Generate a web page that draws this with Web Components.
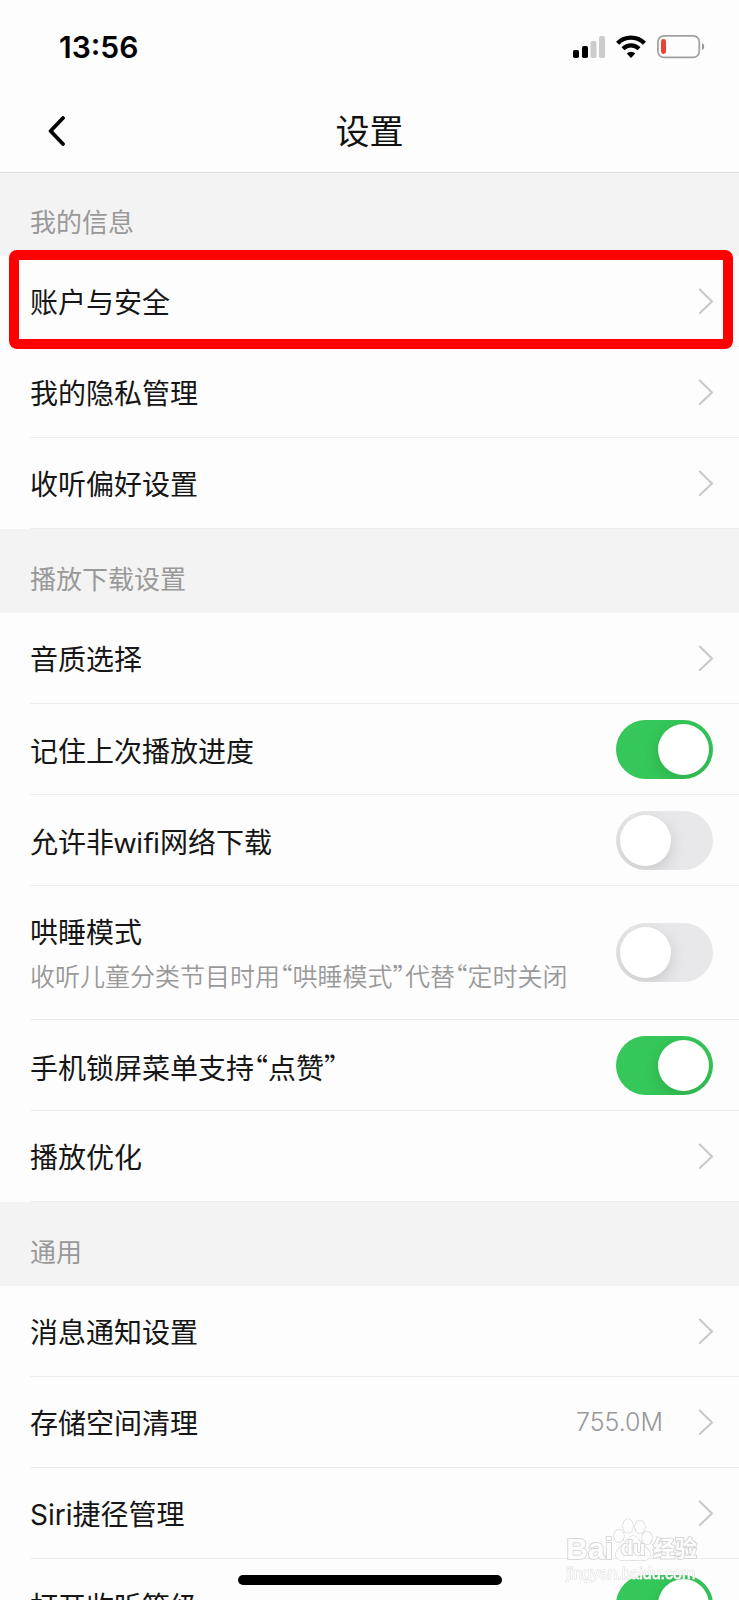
<!DOCTYPE html>
<html lang="zh-CN">
<head>
<meta charset="UTF-8">
<meta name="viewport" content="width=device-width, initial-scale=1">
<title>设置</title>
<style>
  html, body {
    height: 100%;
    margin: 0;
  }

  body {
    background: #fdfdfd;
    color: #161616;
    font-family: Inter, "Noto Sans CJK SC", sans-serif;
    font-size: 28px;
  }

  switch-row {
    font-family: "Noto Sans", "Noto Sans CJK SC", sans-serif;
  }

  /* half-width curly quotes */
  .quoted {
    font-family: "Noto Sans CJK SC", sans-serif;
    font-feature-settings: "halt";
  }
</style>
</head>
<body>

<settings-app>
  <status-bar slot="top" time="13:56"></status-bar>
  <nav-bar slot="top">设置</nav-bar>

  <settings-group label="我的信息">
    <link-row marked>账户与安全</link-row>
    <link-row>我的隐私管理</link-row>
    <link-row>收听偏好设置</link-row>
  </settings-group>

  <settings-group label="播放下载设置">
    <link-row>音质选择</link-row>
    <switch-row on>记住上次播放进度</switch-row>
    <switch-row>允许非wifi网络下载</switch-row>
    <switch-row class="quoted" note="收听儿童分类节目时用“哄睡模式”代替“定时关闭">哄睡模式</switch-row>
    <switch-row class="quoted" on>手机锁屏菜单支持“点赞”</switch-row>
    <link-row>播放优化</link-row>
  </settings-group>

  <settings-group label="通用">
    <link-row>消息通知设置</link-row>
    <link-row value="755.0M">存储空间清理</link-row>
    <link-row>Siri捷径管理</link-row>
    <switch-row on>打开收听等级</switch-row>
  </settings-group>

  <water-mark slot="over"></water-mark>
  <home-indicator slot="over"></home-indicator>
</settings-app>

<script>
  class SettingsApp extends HTMLElement {
    constructor() {
      super();
      this.attachShadow({ mode: "open" });
      this.shadowRoot.innerHTML = `
        <style>
          :host {
            display: flex;
            flex-direction: column;
            height: 100vh;
            overflow: hidden;
          }

          header {
            flex: none;
            position: relative;
            z-index: 1;
            box-shadow: 0 1px 0 #dcdcdc;
          }

          main {
            flex: 1;
            min-height: 0;
            overflow-y: auto;
            scrollbar-width: none;
          }
        </style>
        <header><slot name="top"></slot></header>
        <main><slot></slot></main>
        <slot name="over"></slot>
      `;
    }
  }

  class StatusBar extends HTMLElement {
    connectedCallback() {
      this.attachShadow({ mode: "open" });
      this.shadowRoot.innerHTML = `
        <style>
          :host {
            display: flex;
            align-items: center;
            justify-content: space-between;
            height: 94px;
            padding: 0 34px 0 59px;
            color: #000;
          }

          time {
            font-size: 30px;
            font-weight: 600;
            line-height: 36px;
          }

          .icons {
            display: flex;
            align-items: center;
            gap: 11px;
          }

          svg {
            display: block;
          }
        </style>
        <time>${this.getAttribute("time")}</time>
        <div class="icons">
          <svg width="32" height="24" viewBox="0 0 32 24" aria-label="信号">
            <rect x="0" y="15" width="6" height="8" rx="1.8"/>
            <rect x="9" y="11" width="6" height="12" rx="1.8"/>
            <rect x="17.5" y="6" width="6" height="17" rx="1.8" fill="#ccc"/>
            <rect x="26" y="1" width="6" height="22" rx="1.8" fill="#ccc"/>
          </svg>
          <svg width="30" height="24" viewBox="0 0 30 24" aria-label="无线网络">
            <path d="M1.6 8.2a19 19 0 0 1 26.8 0" fill="none" stroke="#000" stroke-width="4.4"/>
            <path d="M7 13.7a11.4 11.4 0 0 1 16 0" fill="none" stroke="#000" stroke-width="4.2"/>
            <path d="M15 23l-4.3-4.4a6.2 6.2 0 0 1 8.6 0z"/>
          </svg>
          <svg width="48" height="24" viewBox="0 0 48 24" aria-label="电池">
            <rect x=".9" y=".9" width="41.4" height="21.4" rx="6" fill="none" stroke="#a0a0a0" stroke-width="1.7"/>
            <rect x="4" y="4" width="5" height="15" rx="2.4" fill="#ea4335"/>
            <path d="M45 8.2c2.9 1 2.9 5.8 0 6.8z" fill="#969696"/>
          </svg>
        </div>
      `;
    }
  }

  class NavBar extends HTMLElement {
    constructor() {
      super();
      this.attachShadow({ mode: "open" });
      this.shadowRoot.innerHTML = `
        <style>
          :host {
            display: grid;
            grid-template-columns: 80px 1fr 80px;
            align-items: center;
            height: 78px;
          }

          button {
            display: flex;
            justify-content: flex-end;
            border: 0;
            padding: 0 14px 4px 0;
            background: none;
            cursor: pointer;
          }

          h1 {
            margin: 0;
            padding-bottom: 2px;
            text-align: center;
            font-size: 34px;
            font-weight: 400;
            line-height: 48px;
            color: #111;
          }
        </style>
        <button aria-label="返回">
          <svg width="18" height="30" viewBox="0 0 18 30">
            <path d="M15 2L2.6 15l12.4 13" fill="none" stroke="#000" stroke-width="3.8" stroke-linecap="round" stroke-linejoin="round"/>
          </svg>
        </button>
        <h1><slot></slot></h1>
      `;
    }
  }

  class SettingsGroup extends HTMLElement {
    connectedCallback() {
      this.attachShadow({ mode: "open" });
      this.shadowRoot.innerHTML = `
        <style>
          :host {
            display: block;
          }

          h2 {
            display: flex;
            align-items: center;
            box-sizing: border-box;
            height: 84px;
            margin: 0;
            padding: 18px 30px 0;
            background: #f3f3f3;
            color: #999;
            font-size: 26px;
            font-weight: 400;
            line-height: 36px;
          }
        </style>
        <h2>${this.getAttribute("label")}</h2>
        <slot></slot>
      `;
    }
  }

  // box, label and divider shared by both kinds of row
  const rowStyle = `
    :host {
      display: block;
      position: relative;
      padding-left: 30px;
    }

    .row {
      display: flex;
      align-items: center;
      box-sizing: border-box;
      min-height: 91px;
      padding-right: 26px;
      border-bottom: 1px solid #ededed;
      color: inherit;
      text-decoration: none;
    }

    .label {
      flex: 1;
      padding-top: 4px;
      line-height: 40px;
    }
  `;

  class LinkRow extends HTMLElement {
    connectedCallback() {
      const value = this.getAttribute("value");
      this.attachShadow({ mode: "open" });
      this.shadowRoot.innerHTML = `
        <style>
          ${rowStyle}

          .value {
            margin-right: 35px;
            color: #999;
            font-size: 25px;
            font-weight: 300;
          }

          svg {
            flex: none;
          }

          :host([marked])::after {
            content: "";
            position: absolute;
            z-index: 1;
            inset: -6px 6px -2px 9px;
            border: 10px solid #f00;
            border-radius: 8px;
            pointer-events: none;
          }
        </style>
        <a class="row" href="#">
          <span class="label"><slot></slot></span>
          ${value ? `<span class="value">${value}</span>` : ""}
          <svg width="15" height="26" viewBox="0 0 15 26">
            <path d="M1.8 1.5L14 13.5l-12.2 11.5" fill="none" stroke="#c8c8c8" stroke-width="2" stroke-linecap="round"/>
          </svg>
        </a>
      `;
    }
  }

  class SwitchRow extends HTMLElement {
    connectedCallback() {
      const note = this.getAttribute("note");
      this.attachShadow({ mode: "open" });
      this.shadowRoot.innerHTML = `
        <style>
          ${rowStyle}

          :host([note]) .row {
            min-height: 134px;
          }

          .note {
            display: block;
            color: #999;
            font-size: 25px;
            font-weight: 350;
            line-height: 48px;
          }

          input {
            appearance: none;
            flex: none;
            width: 97px;
            height: 59px;
            margin: 0;
            padding: 4px;
            box-sizing: border-box;
            border-radius: 30px;
            background: #e8e8ea;
            overflow: hidden;
            cursor: pointer;
          }

          input::before {
            content: "";
            display: block;
            width: 51px;
            height: 51px;
            border-radius: 50%;
            background: #fff;
            box-shadow: 0 5px 16px rgba(0, 0, 0, 0.14);
          }

          input:checked {
            background: #35c759;
          }

          input:checked::before {
            margin-left: auto;
          }
        </style>
        <label class="row">
          <span class="label">
            <slot></slot>
            ${note ? `<span class="note">${note}</span>` : ""}
          </span>
          <input type="checkbox" role="switch" ${this.hasAttribute("on") ? "checked" : ""}>
        </label>
      `;
    }
  }

  class WaterMark extends HTMLElement {
    constructor() {
      super();
      this.attachShadow({ mode: "open" });
      this.shadowRoot.innerHTML = `
        <style>
          :host {
            position: fixed;
            z-index: 2;
            right: 42px;
            bottom: 16px;
            pointer-events: none;
            color: #fdfdfd;
            font-family: "Liberation Sans", "Noto Sans CJK SC", sans-serif;
            font-weight: 700;
            -webkit-text-stroke: 2px #d8d8d8;
            paint-order: stroke fill;
          }

          .brand {
            display: flex;
            align-items: flex-end;
            height: 46px;
            font-size: 30px;
            line-height: 30px;
          }

          .paw {
            position: relative;
            width: 40px;
            height: 46px;
          }

          .paw span {
            position: absolute;
            left: 0;
            right: 0;
            bottom: 6px;
            text-align: center;
            font-size: 20px;
            line-height: 20px;
          }

          .cn {
            font-size: 22px;
          }

          .site {
            font-size: 16px;
            font-weight: 400;
            line-height: 20px;
            -webkit-text-stroke: 1px #dcdcdc;
          }
        </style>
        <div class="brand">
          <span>Bai</span>
          <div class="paw">
            <svg width="40" height="46" viewBox="0 0 40 46" fill="#fdfdfd" stroke="#d0d0d0" stroke-width="1.2">
              <ellipse cx="6" cy="18" rx="5" ry="6.5"/>
              <ellipse cx="15" cy="8" rx="5" ry="7"/>
              <ellipse cx="27" cy="9" rx="5" ry="6.5"/>
              <ellipse cx="34" cy="20" rx="5" ry="6.5"/>
              <path d="M20 18c-5 0-6 5-10 9-5 4-8 7-7 11 1 5 7 5 17 4 10 1 16 1 17-4 1-4-2-7-7-11-4-4-5-9-10-9z"/>
            </svg>
            <span>du</span>
          </div>
          <span class="cn">经验</span>
        </div>
        <div class="site">jingyan.baidu.com</div>
      `;
    }
  }

  class HomeIndicator extends HTMLElement {
    constructor() {
      super();
      this.attachShadow({ mode: "open" });
      this.shadowRoot.innerHTML = `
        <style>
          :host {
            position: fixed;
            z-index: 2;
            left: 0;
            right: 0;
            bottom: 15px;
            width: 264px;
            height: 10px;
            margin: 0 auto;
            border-radius: 5px;
            background: #000;
          }
        </style>
      `;
    }
  }

  customElements.define("settings-app", SettingsApp);
  customElements.define("status-bar", StatusBar);
  customElements.define("nav-bar", NavBar);
  customElements.define("settings-group", SettingsGroup);
  customElements.define("link-row", LinkRow);
  customElements.define("switch-row", SwitchRow);
  customElements.define("water-mark", WaterMark);
  customElements.define("home-indicator", HomeIndicator);
</script>
</body>
</html>
